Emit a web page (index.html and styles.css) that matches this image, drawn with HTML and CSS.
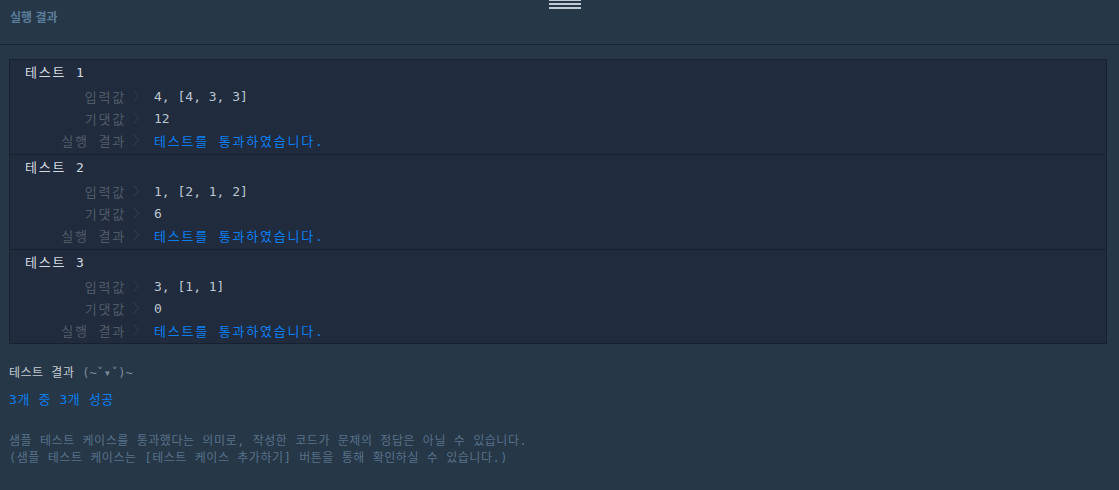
FILE: index.html
```html
<!DOCTYPE html>
<html lang="ko">
<head>
    <meta charset="UTF-8">
    <meta name="viewport" content="width=device-width, initial-scale=1.0">
    <title>실행 결과</title>
    <link rel="stylesheet" href="styles.css">
</head>
<body>
    <div class="grip"><span></span><span></span><span></span></div>
    <header class="panel-head">
        <h2>실행 결과</h2>
    </header>
    <main class="console">
        <div class="results">
            <section class="test">
                <h3>테스트 1</h3>
                <div class="row"><span class="label">입력값</span><svg class="arrow" viewBox="0 0 6 12"><path d="M0.5 0.5 L5.5 6 L0.5 11.5"/></svg><span class="value">4, [4, 3, 3]</span></div>
                <div class="row"><span class="label">기댓값</span><svg class="arrow" viewBox="0 0 6 12"><path d="M0.5 0.5 L5.5 6 L0.5 11.5"/></svg><span class="value">12</span></div>
                <div class="row"><span class="label">실행 결과</span><svg class="arrow" viewBox="0 0 6 12"><path d="M0.5 0.5 L5.5 6 L0.5 11.5"/></svg><span class="pass">테스트를 통과하였습니다.</span></div>
            </section>
            <section class="test">
                <h3>테스트 2</h3>
                <div class="row"><span class="label">입력값</span><svg class="arrow" viewBox="0 0 6 12"><path d="M0.5 0.5 L5.5 6 L0.5 11.5"/></svg><span class="value">1, [2, 1, 2]</span></div>
                <div class="row"><span class="label">기댓값</span><svg class="arrow" viewBox="0 0 6 12"><path d="M0.5 0.5 L5.5 6 L0.5 11.5"/></svg><span class="value">6</span></div>
                <div class="row"><span class="label">실행 결과</span><svg class="arrow" viewBox="0 0 6 12"><path d="M0.5 0.5 L5.5 6 L0.5 11.5"/></svg><span class="pass">테스트를 통과하였습니다.</span></div>
            </section>
            <section class="test">
                <h3>테스트 3</h3>
                <div class="row"><span class="label">입력값</span><svg class="arrow" viewBox="0 0 6 12"><path d="M0.5 0.5 L5.5 6 L0.5 11.5"/></svg><span class="value">3, [1, 1]</span></div>
                <div class="row"><span class="label">기댓값</span><svg class="arrow" viewBox="0 0 6 12"><path d="M0.5 0.5 L5.5 6 L0.5 11.5"/></svg><span class="value">0</span></div>
                <div class="row"><span class="label">실행 결과</span><svg class="arrow" viewBox="0 0 6 12"><path d="M0.5 0.5 L5.5 6 L0.5 11.5"/></svg><span class="pass">테스트를 통과하였습니다.</span></div>
            </section>
        </div>

        <div class="summary">
            <p class="summary-title">테스트 결과 <span class="face">(~ˇ▾ˇ)~</span></p>
            <p class="score">3개 중 3개 성공</p>
            <p class="note">샘플 테스트 케이스를 통과했다는 의미로, 작성한 코드가 문제의 정답은 아닐 수 있습니다.<br>(샘플 테스트 케이스는 [테스트 케이스 추가하기] 버튼을 통해 확인하실 수 있습니다.)</p>
        </div>
    </main>
</body>
</html>
```

FILE: styles.css
```css
body {
    margin: 0;
    background: #263747;
    font-family: "DejaVu Sans Mono", "Noto Sans CJK KR", monospace;
    font-size: 13px;
    color: #bcc6d1;
    height: 490px;
    overflow: hidden;
}
.grip {
    position: absolute;
    top: 0;
    left: 549px;
    width: 32px;
    display: flex;
    flex-direction: column;
    gap: 2px;
}
.grip span {
    height: 2px;
    background: #c3ccd5;
}
.grip span:first-child {
    height: 1px;
}
.panel-head {
    height: 45px;
    border-bottom: 1px solid #1a2433;
    padding: 8px 0 0 10px;
    box-sizing: border-box;
}
.panel-head h2 {
    margin: 0;
    font-family: "Noto Sans CJK KR", sans-serif;
    font-size: 12px;
    font-weight: bold;
    line-height: 18px;
    color: #5b7d9c;
}
.console {
    padding: 14px 12px 0 9px;
}
.results {
    background: #202b3d;
    border: 1px solid #172130;
}
.test {
    padding-bottom: 3px;
    border-bottom: 1px solid #172130;
}
.test:last-child {
    border-bottom: none;
    padding-bottom: 2px;
}
.test h3 {
    margin: 0;
    padding: 1px 0 0 15px;
    font-size: 13px;
    font-weight: normal;
    line-height: 24px;
    letter-spacing: 1.8px;
    color: #d3d9e0;
}
.row {
    display: flex;
    align-items: center;
    height: 22px;
}
.label {
    width: 116px;
    text-align: right;
    letter-spacing: 1.8px;
    color: #4f5b69;
}
.arrow {
    width: 6px;
    height: 12px;
    margin: 0 15px 0 7px;
    fill: none;
    stroke: #364354;
    stroke-width: 1;
}
.value {
    color: #bcc6d1;
}
.pass {
    letter-spacing: 1.8px;
    color: #0c7ff2;
}
.summary p {
    margin: 0;
}
.summary-title {
    margin-top: 21px !important;
    font-size: 12px;
    line-height: 17px;
    letter-spacing: 0.5px;
    color: #c4cad1;
}
.face {
    letter-spacing: 0;
    color: #7f8c9b;
}
.score {
    margin-top: 8px !important;
    font-size: 13px;
    line-height: 20px;
    letter-spacing: 0.6px;
    color: #0c7ff2;
}
.note {
    margin-top: 23px !important;
    font-size: 12px;
    line-height: 17px;
    letter-spacing: 0.55px;
    color: #587189;
}
```
